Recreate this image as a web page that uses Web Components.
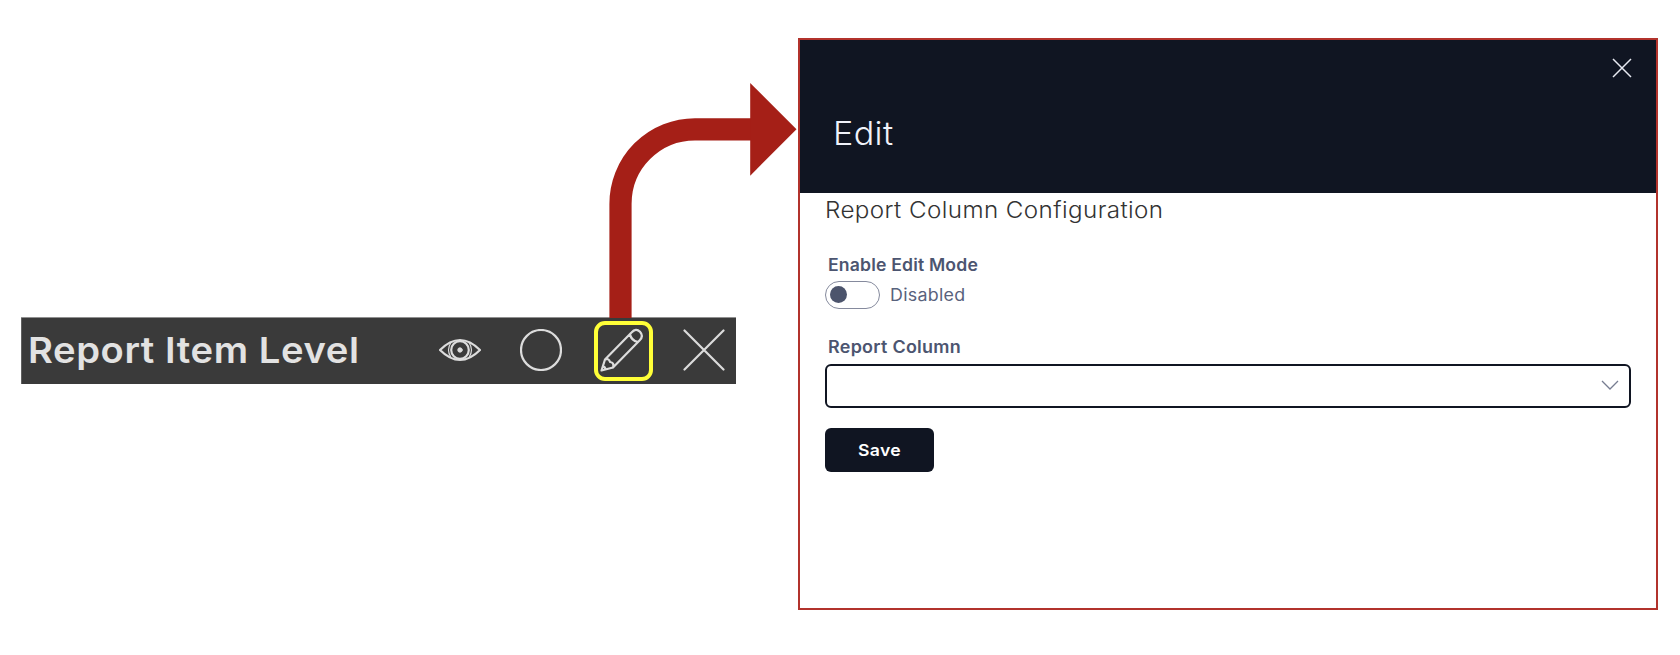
<!DOCTYPE html>
<html lang="en">
<head>
<meta charset="utf-8">
<title>Report Column Configuration</title>
<style>
body{margin:0;background:#fff;font-family:Inter,"Open Sans",sans-serif}
</style>
</head>
<body>
<report-page></report-page>
<script>
const define = (name, html, ready) => customElements.define(name, class extends HTMLElement {
  connectedCallback() {
    if (this.shadowRoot) return;
    const t = document.createElement('template');
    t.innerHTML = html;
    this.attachShadow({mode: 'open'}).append(t.content.cloneNode(true));
    if (ready) ready(this);
  }
});

// Single line of text, widened so that it spans the width given in its "span" attribute:
// mostly by stretching the letters, the rest by tracking.
define('tracked-text', `<style>:host{display:block;white-space:nowrap}span{display:inline-block;transform-origin:0 50%}</style><span><slot></slot></span>`, el => {
  const span = el.shadowRoot.querySelector('span');
  const target = Number(el.getAttribute('span'));
  const natural = span.getBoundingClientRect().width;
  const scale = 1 + (target / natural - 1) * 0.67;
  span.style.letterSpacing = ((target / scale - natural) / el.textContent.length).toFixed(3) + 'px';
  span.style.transform = 'scaleX(' + scale.toFixed(4) + ')';
  el.style.width = target + 'px';
});

define('item-toolbar', `<style>
:host{display:flex;align-items:center;justify-content:space-between;box-sizing:border-box;width:715px;height:67px;padding:0 11.5px 0 7px;background:#3a3a3a;box-shadow:inset 0 1px #909090,inset 1px 0 #606060;color:#e2e2e2}
tracked-text{font-size:35.8px;font-weight:600;line-height:64px;margin-top:-2px}
.icons{display:flex;align-items:center;margin-top:-1px}
svg{display:block;fill:none;stroke:#dcdcdc;stroke-width:2.200;stroke-linecap:round;stroke-linejoin:round}
.eye{margin-right:39px}.circle{margin-right:32px}
.edit{box-sizing:border-box;width:59px;height:60px;border:4px solid #ffff38;border-radius:11px;display:grid;place-items:center;margin:2px 30px 0 0}
.edit svg{margin:-2px 0 0 -2px}
</style>
<tracked-text span="331.500">Report Item Level</tracked-text>
<div class="icons">
<svg class="eye" width="42" height="24" viewBox="0 0 42 24"><path d="M1 12C8 5 14 2 21 2s13 3 20 10C34 19 28 22 21 22S8 19 1 12Z"/><path d="M12 4.500Q7 12 12 19.500M30 4.500Q35 12 30 19.500" stroke-width="1.200"/><circle cx="21" cy="12" r="8.800"/><circle cx="21" cy="12" r="2.200" fill="#dcdcdc" stroke-width="1"/></svg>
<svg class="circle" width="42" height="42" viewBox="0 0 42 42"><circle cx="21" cy="21" r="20"/></svg>
<div class="edit"><svg width="44" height="44" viewBox="0 0 44 44"><path d="M1.500 42.500 5 31.500 31.500 4.500Q36-.500 40 3.800T39.500 12.500L13 39.500ZM5 31.500Q9 30 10 34 14.500 34.500 13 39.500M30 6Q31 12.500 38 14M2.800 38.500Q5 38.500 5.500 41"/></svg></div>
<svg width="42" height="42" viewBox="0 0 42 42"><path d="M1.500 1.500 40.500 40.500M40.500 1.500 1.500 40.500"/></svg>
</div>`);

define('callout-arrow', `<style>:host{display:block}svg{display:block}</style>
<svg width="190" height="238" viewBox="608 81 190 238"><path d="M620.500 318V204A74.500 74.500 0 0 1 695 129.300H752" fill="none" stroke="#a51f17" stroke-width="22.200"/><path d="M750.200 83 796.500 129.300 750.200 175.700Z" fill="#a51f17"/></svg>`);

define('toggle-switch', `<style>
:host{display:flex;align-items:center;gap:10px;color:#59627c;font-size:16.7px;line-height:28px}
.track{box-sizing:border-box;width:55px;height:28px;border:1px solid #858a9d;border-radius:14px;padding:0 3.500px;display:flex;align-items:center}
.knob{width:17px;height:17px;border-radius:50%;background:#4c546c}
</style><div class="track"><div class="knob"></div></div><slot></slot>`);

define('select-box', `<style>
:host{display:flex;align-items:center;justify-content:flex-end;box-sizing:border-box;height:44px;padding-right:10.500px;border:2px solid #101522;border-radius:6px}
svg{fill:none;stroke:#777d91;stroke-width:1.300;margin-bottom:2px}
</style><svg width="18" height="10" viewBox="0 0 18 10"><path d="m1 1 8 8 8-8"/></svg>`);

define('save-button', `<style>
:host{display:block}
button{all:unset;box-sizing:border-box;display:flex;justify-content:center;align-items:center;width:108.500px;height:43.500px;border-radius:6px;background:#101522;color:#fff;font-size:16.500px;font-weight:600;line-height:43px}
</style><button><slot></slot></button>`);

define('edit-panel', `<style>
:host{display:block;box-sizing:border-box;width:860px;height:572px;border:2px solid #b2332c;background:#fff}
header{box-sizing:border-box;height:152.700px;background:#101522;color:#f0f2fa;padding:18px 24px 0 33px}
.close{display:flex;justify-content:flex-end}
.close svg{display:block;fill:none;stroke:#e8eaf2;stroke-width:1.500}
.title{font-size:32.500px;font-weight:300;line-height:40px;margin-top:36px}
.body{padding:0 25px}
.heading{font-size:22.600px;font-weight:300;line-height:34px;color:#333;margin-left:-.5px}
.label{font-size:16.900px;font-weight:600;line-height:24px;color:#4c5570;padding-left:3px}
.first{margin-top:26.800px}
toggle-switch{margin-top:3.500px}
.second{margin-top:26.500px}
select-box{margin-top:4.500px}
save-button{margin-top:20.500px}
</style>
<header>
<div class="close"><svg width="20" height="20" viewBox="0 0 20 20"><path d="M1 1 19 19M19 1 1 19"/></svg></div>
<tracked-text class="title" span="60.500">Edit</tracked-text>
</header>
<div class="body">
<tracked-text class="heading" span="338.500">Report Column Configuration</tracked-text>
<tracked-text class="label first" span="150">Enable Edit Mode</tracked-text>
<toggle-switch><tracked-text span="75.500">Disabled</tracked-text></toggle-switch>
<tracked-text class="label second" span="133">Report Column</tracked-text>
<select-box></select-box>
<save-button><tracked-text span="43">Save</tracked-text></save-button>
</div>`);

define('report-page', `<style>
:host{display:flex;align-items:flex-start;position:relative;width:1680px;height:655px;overflow:hidden}
.source{box-sizing:border-box;width:798px;padding:317px 0 0 21px}
edit-panel{margin-top:38px}
callout-arrow{position:absolute;left:608px;top:81px}
</style>
<div class="source"><item-toolbar></item-toolbar></div>
<edit-panel></edit-panel>
<callout-arrow></callout-arrow>`);
</script>
</body>
</html>
